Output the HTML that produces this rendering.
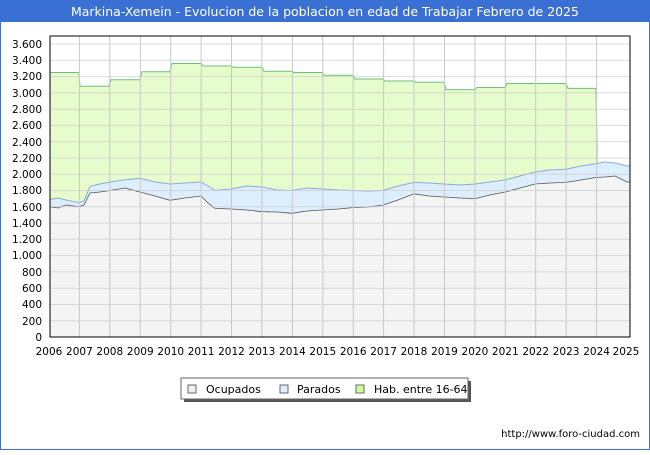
<!DOCTYPE html>
<html><head><meta charset="utf-8"><style>
body{margin:0;width:650px;height:450px;overflow:hidden;background:#fff;font-family:"Liberation Sans","DejaVu Sans",sans-serif}
</style></head><body>
<svg width="650" height="450" xmlns="http://www.w3.org/2000/svg" font-family="DejaVu Sans, Liberation Sans, sans-serif">
<rect x="0" y="0" width="650" height="450" fill="#fff" stroke="#3a70d4" stroke-width="2"/>
<rect x="0" y="0" width="650" height="22" fill="#3a70d4"/>
<text x="325" y="16" text-anchor="middle" font-size="12.5" fill="#fff">Markina-Xemein - Evolucion de la poblacion en edad de Trabajar Febrero de 2025</text>
<rect x="50" y="36" width="580" height="301" fill="#fff"/>
<polygon fill="#e6fccc" stroke="#6fbf7a" stroke-width="1" points="50,337 50,72.5 79,72.5 80,86.3 109,86.3 111,79.8 140,79.8 142,71.7 170,71.7 172,63.5 201,63.5 203,66 231,66 233,67.2 262,67.2 264,71.3 292,71.3 294,72.5 322,72.5 324,75.3 353,75.3 355,79 383,79 385,81 414,81 416,82.3 444,82.3 446,89.6 475,89.6 477,87.5 505,87.5 507,83.5 566,83.5 568,88.4 596,88.4 597,145 597,337"/>
<polygon fill="#ddeeff" stroke="#88aadd" stroke-width="1" points="50,199.5 58,198 66,200 79,202.7 84,201 90,186.4 100,184 110,182 125,179.9 140,178.3 155,182 170,184 185,183 201,182 208,186 215,190.5 231,188.9 247,186 262,187 277,190 292,190.5 307,188 322,189 338,190 353,190.5 368,191 383,190.5 398,186 414,182.4 429,183 444,184 460,185 475,184 490,182 505,180 520,176 535,172 550,170 566,169.3 581,166 596,163.6 605,162 615,163 627,166 630,166 630,337 50,337"/>
<polygon fill="#f4f4f4" stroke="#555" stroke-width="0.8" points="50,206.8 58,208 66,205 79,206.8 84,205 90,193 100,192 110,190.5 125,188 140,192.1 155,196 170,200.3 185,198 201,196 208,203 215,208.4 231,209 247,210 262,211.7 277,212 292,213.3 307,211 322,210 338,209 353,207.6 368,207 383,205.1 398,200 414,193.8 429,196 444,197 460,198 475,198.6 490,195 505,192.1 520,188 535,184 550,183 566,182.4 581,180 596,177.5 605,177 615,176 627,182 630,182 630,337 50,337"/>
<g stroke="#cccccc" stroke-width="1" opacity="0.7">
<line x1="50" x2="630" y1="44" y2="44"/><line x1="50" x2="630" y1="60.3" y2="60.3"/><line x1="50" x2="630" y1="76.6" y2="76.6"/><line x1="50" x2="630" y1="92.9" y2="92.9"/><line x1="50" x2="630" y1="109.2" y2="109.2"/><line x1="50" x2="630" y1="125.4" y2="125.4"/><line x1="50" x2="630" y1="141.7" y2="141.7"/><line x1="50" x2="630" y1="158" y2="158"/><line x1="50" x2="630" y1="174.3" y2="174.3"/><line x1="50" x2="630" y1="190.5" y2="190.5"/><line x1="50" x2="630" y1="206.8" y2="206.8"/><line x1="50" x2="630" y1="223.1" y2="223.1"/><line x1="50" x2="630" y1="239.3" y2="239.3"/><line x1="50" x2="630" y1="255.6" y2="255.6"/><line x1="50" x2="630" y1="271.9" y2="271.9"/><line x1="50" x2="630" y1="288.2" y2="288.2"/><line x1="50" x2="630" y1="304.5" y2="304.5"/><line x1="50" x2="630" y1="320.8" y2="320.8"/>
</g>
<g stroke="#c8c8c8" stroke-width="1">
<line x1="79.4" x2="79.4" y1="36" y2="337"/><line x1="109.8" x2="109.8" y1="36" y2="337"/><line x1="140.3" x2="140.3" y1="36" y2="337"/><line x1="170.7" x2="170.7" y1="36" y2="337"/><line x1="201.1" x2="201.1" y1="36" y2="337"/><line x1="231.5" x2="231.5" y1="36" y2="337"/><line x1="261.9" x2="261.9" y1="36" y2="337"/><line x1="292.4" x2="292.4" y1="36" y2="337"/><line x1="322.8" x2="322.8" y1="36" y2="337"/><line x1="353.2" x2="353.2" y1="36" y2="337"/><line x1="383.6" x2="383.6" y1="36" y2="337"/><line x1="414" x2="414" y1="36" y2="337"/><line x1="444.5" x2="444.5" y1="36" y2="337"/><line x1="474.9" x2="474.9" y1="36" y2="337"/><line x1="505.3" x2="505.3" y1="36" y2="337"/><line x1="535.7" x2="535.7" y1="36" y2="337"/><line x1="566.1" x2="566.1" y1="36" y2="337"/><line x1="596.6" x2="596.6" y1="36" y2="337"/>
</g>
<rect x="50" y="36" width="580" height="301" fill="none" stroke="#000" stroke-width="1"/>
<g font-size="10.5" fill="#000" text-anchor="end">
<text x="42" y="48">3.600</text><text x="42" y="64">3.400</text><text x="42" y="80">3.200</text><text x="42" y="97">3.000</text><text x="42" y="113">2.800</text><text x="42" y="129">2.600</text><text x="42" y="146">2.400</text><text x="42" y="162">2.200</text><text x="42" y="178">2.000</text><text x="42" y="194">1.800</text><text x="42" y="211">1.600</text><text x="42" y="227">1.400</text><text x="42" y="243">1.200</text><text x="42" y="259">1.000</text><text x="42" y="276">800</text><text x="42" y="292">600</text><text x="42" y="308">400</text><text x="42" y="325">200</text><text x="42" y="341">0</text>
</g>
<g font-size="10.5" fill="#000" text-anchor="middle">
<text x="49" y="355">2006</text><text x="79.4" y="355">2007</text><text x="109.8" y="355">2008</text><text x="140.3" y="355">2009</text><text x="170.7" y="355">2010</text><text x="201.1" y="355">2011</text><text x="231.5" y="355">2012</text><text x="261.9" y="355">2013</text><text x="292.4" y="355">2014</text><text x="322.8" y="355">2015</text><text x="353.2" y="355">2016</text><text x="383.6" y="355">2017</text><text x="414" y="355">2018</text><text x="444.5" y="355">2019</text><text x="474.9" y="355">2020</text><text x="505.3" y="355">2021</text><text x="535.7" y="355">2022</text><text x="566.1" y="355">2023</text><text x="596.6" y="355">2024</text><text x="626" y="355">2025</text>
</g>
<rect x="184" y="381" width="287" height="21" fill="#555"/>
<rect x="181" y="378" width="287" height="21" fill="#fff" stroke="#666"/>
<g font-size="11" fill="#000">
<rect x="188" y="385" width="8" height="8" fill="#eee" stroke="#666"/><text x="206" y="393">Ocupados</text>
<rect x="280" y="385" width="8" height="8" fill="#ddeeff" stroke="#666"/><text x="297" y="393">Parados</text>
<rect x="356" y="385" width="8" height="8" fill="#ccff99" stroke="#666"/><text x="374" y="393">Hab. entre 16-64</text>
</g>
<text x="640" y="437" text-anchor="end" font-size="10" fill="#000">http://www.foro-ciudad.com</text>
</svg>
</body></html>
